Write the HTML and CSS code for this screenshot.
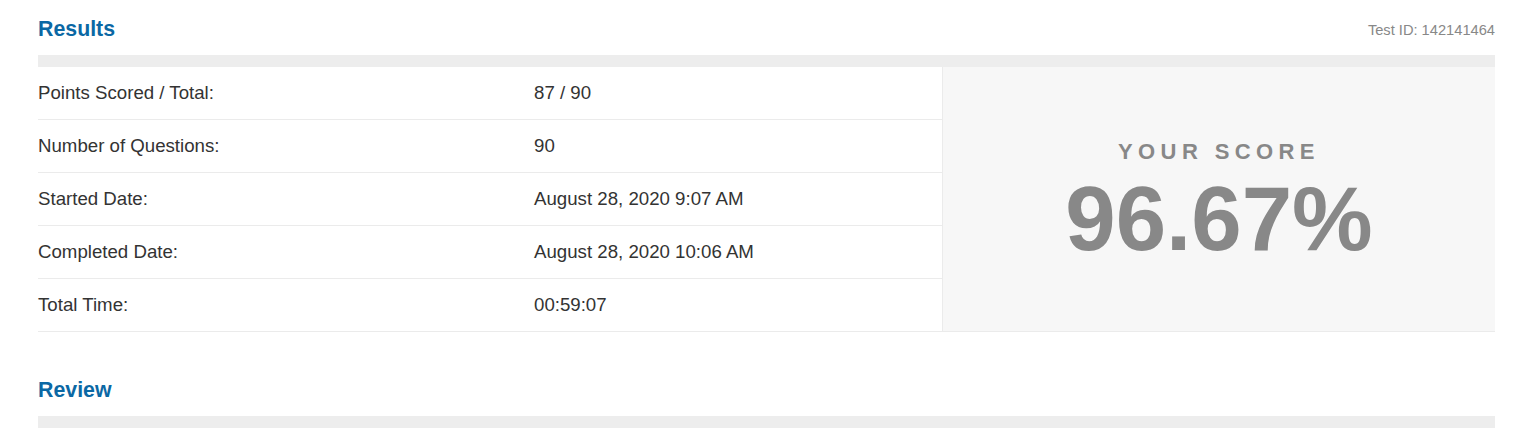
FILE: index.html
```html
<!DOCTYPE html>
<html>
<head>
<meta charset="utf-8">
<link rel="stylesheet" href="styles.css">
</head>
<body>
<div class="page">
  <section class="section">
    <div class="section-head">
      <h2 class="section-title">Results</h2>
      <span class="test-id">Test ID: 142141464</span>
    </div>
    <div class="section-bar"></div>
    <div class="results">
      <div class="details">
        <div class="row"><span class="label">Points Scored / Total:</span><span class="value">87 / 90</span></div>
        <div class="row"><span class="label">Number of Questions:</span><span class="value">90</span></div>
        <div class="row"><span class="label">Started Date:</span><span class="value">August 28, 2020 9:07 AM</span></div>
        <div class="row"><span class="label">Completed Date:</span><span class="value">August 28, 2020 10:06 AM</span></div>
        <div class="row"><span class="label">Total Time:</span><span class="value">00:59:07</span></div>
      </div>
      <div class="score">
        <div class="score-label">YOUR SCORE</div>
        <div class="score-value">96.67%</div>
      </div>
    </div>
  </section>
  <section class="section review">
    <div class="section-head">
      <h2 class="section-title">Review</h2>
    </div>
    <div class="section-bar"></div>
  </section>
</div>
</body>
</html>
```
FILE: styles.css
```css
html, body {
  margin: 0;
  padding: 0;
  background: #fff;
}
body {
  font-family: "Liberation Sans", Arial, sans-serif;
  color: #333;
}
.page {
  width: 1457px;
  margin-left: 38px;
}
.section-head {
  height: 55px;
  display: flex;
  align-items: center;
  justify-content: space-between;
  padding-top: 4px;
  box-sizing: border-box;
}
.section-title {
  margin: 0;
  font-size: 21.33px;
  font-weight: bold;
  color: #0b68a4;
}
.test-id {
  font-size: 14.67px;
  color: #888;
}
.section-bar {
  height: 12px;
  background: #ededed;
}
.results {
  display: flex;
  border-bottom: 1px solid #ebebeb;
}
.details {
  width: 904px;
}
.row {
  display: flex;
  align-items: center;
  height: 52px;
  font-size: 18.67px;
  color: #333;
}
.row + .row {
  border-top: 1px solid #ebebeb;
}
.label {
  width: 496px;
}
.score {
  flex: 1;
  background: #f7f7f7;
  border-left: 1px solid #ebebeb;
  display: flex;
  flex-direction: column;
  align-items: center;
  justify-content: center;
  color: #888;
  font-weight: bold;
  padding-top: 8px;
}
.score-label {
  font-size: 22px;
  letter-spacing: 5.4px;
  line-height: 26px;
}
.score-value {
  font-size: 90.67px;
  line-height: 96px;
  margin-top: 6px;
}
.review {
  margin-top: 29px;
}
```
